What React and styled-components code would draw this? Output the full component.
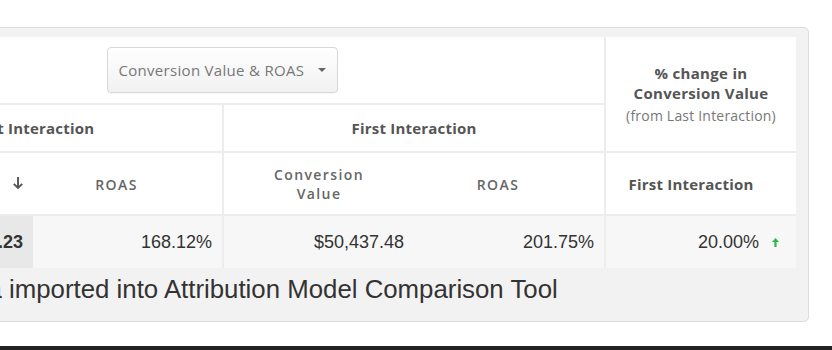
import React from 'react';
import styled, { createGlobalStyle } from 'styled-components';

const GlobalStyle = createGlobalStyle`
  body {
    margin: 0;
    background: #fff;
    font-family: 'Open Sans', 'Liberation Sans', sans-serif;
  }
`;

const Page = styled.div`
  width: 832px;
  height: 350px;
  overflow: hidden;
  display: flex;
  flex-direction: column;
  background: #fff;
`;

// the screenshot is scrolled sideways, so the panel starts off to the left
const Panel = styled.div`
  box-sizing: border-box;
  flex: none;
  width: 985px;
  height: 295px;
  margin: 27px 0 0 -176px;
  padding: 9px 12px 0;
  background: #f2f2f2;
  border: 1px solid #dcdcdc;
  border-radius: 5px;
`;

const Table = styled.table`
  width: 959px;
  table-layout: fixed;
  border-collapse: collapse;
  background: #fff;
`;

const Row = styled.tr`
  height: ${(p) => p.h}px;
  background: ${(p) => p.bg || '#fff'};
`;

const HeadCell = styled.th`
  padding: 0 ${(p) => p.pr || 6}px 0 ${(p) => p.pl || 6}px;
  text-align: center;
  vertical-align: middle;
  color: #555;
  font-size: 15px;
  font-weight: 700;
  letter-spacing: 0.2px;
  border-top: 2px solid #ededed;
  border-left: ${(p) => (p.divider ? '2px solid #ededed' : 'none')};
  white-space: ${(p) => (p.wrap ? 'normal' : 'nowrap')};
`;

const SmallHead = styled.span`
  display: inline-block;
  font-size: 14px;
  font-weight: 600;
  letter-spacing: 1.4px;
  line-height: 19px;
  color: #666;
`;

const ChangeHead = styled.div`
  font-size: 15px;
  line-height: 20px;
  color: #555;
  font-weight: 700;
  letter-spacing: 0.3px;
`;

const ChangeSub = styled.div`
  margin-top: 3px;
  font-size: 14px;
  line-height: 20px;
  color: #777;
  font-weight: 400;
  letter-spacing: 0.2px;
`;

const DataCell = styled.td`
  padding: 0 10px;
  text-align: right;
  vertical-align: middle;
  font-family: 'Liberation Sans', Arial, sans-serif;
  font-size: 18px;
  color: #333;
  font-weight: ${(p) => (p.strong ? 700 : 400)};
  background: ${(p) => (p.sorted ? '#e8e8e8' : 'transparent')};
  border-top: 2px solid #ededed;
  border-left: ${(p) => (p.divider ? '2px solid #ededed' : 'none')};
`;

const Dropdown = styled.button`
  display: inline-flex;
  align-items: center;
  gap: 14px;
  box-sizing: border-box;
  width: 231px;
  height: 46px;
  margin-left: 3px;
  padding: 0 10px 0 11px;
  border: 1px solid #d8d8d8;
  border-radius: 4px;
  background: linear-gradient(#ffffff, #f1f1f1);
  box-shadow: 0 1px 1px rgba(0, 0, 0, 0.04);
  font-family: 'Open Sans', 'Liberation Sans', sans-serif;
  font-size: 15px;
  letter-spacing: 0.3px;
  white-space: nowrap;
  color: #777;
`;

const Caret = styled.span`
  flex: none;
  width: 0;
  height: 0;
  border-left: 4px solid transparent;
  border-right: 4px solid transparent;
  border-top: 4px solid #666;
`;

const ArrowBox = styled.span`
  display: inline-flex;
  align-items: center;
  justify-content: flex-end;
  width: 100%;
  padding-right: 3px;
  box-sizing: border-box;
`;

const Change = styled.span`
  display: inline-flex;
  align-items: center;
  gap: 13px;
  padding-right: 7px;
`;

const Caption = styled.div`
  margin-top: 6px;
  margin-left: -23px;
  font-family: 'Liberation Sans', Arial, sans-serif;
  font-size: 25.8px;
  line-height: 30px;
  color: #333;
  white-space: nowrap;
`;

const Spacer = styled.div`
  flex: 1;
`;

const DarkBar = styled.div`
  height: 4px;
  background: #222;
`;

const SortDown = () => (
  <svg width="12" height="14" viewBox="0 0 12 14">
    <path d="M6 1v11M1.8 7.8L6 12l4.2-4.2" stroke="#555" strokeWidth="1.9" fill="none" />
  </svg>
);

const UpArrow = () => (
  <svg width="7" height="9" viewBox="0 0 7 9">
    <path d="M3.5 0L7 4H4.6v5H2.4V4H0z" fill="#2db84a" />
  </svg>
);

const App = () => (
  <Page>
    <GlobalStyle />
    <Panel>
      <Table>
        <colgroup>
          <col style={{ width: 196 }} />
          <col style={{ width: 190 }} />
          <col style={{ width: 191 }} />
          <col style={{ width: 191 }} />
          <col style={{ width: 191 }} />
        </colgroup>
        <tbody>
          <Row h={67}>
            <HeadCell colSpan={4} style={{ borderTop: 'none' }}>
              <Dropdown>
                Conversion Value &amp; ROAS
                <Caret />
              </Dropdown>
            </HeadCell>
            <HeadCell rowSpan={2} divider wrap style={{ borderTop: 'none' }}>
              <ChangeHead>% change in</ChangeHead>
              <ChangeHead>Conversion Value</ChangeHead>
              <ChangeSub>(from Last Interaction)</ChangeSub>
            </HeadCell>
          </Row>
          <Row h={48}>
            <HeadCell colSpan={2} pl={13}>Last Interaction</HeadCell>
            <HeadCell colSpan={2} divider>First Interaction</HeadCell>
          </Row>
          <Row h={63}>
            <HeadCell>
              <ArrowBox>
                <SortDown />
              </ArrowBox>
            </HeadCell>
            <HeadCell pr={28}>
              <SmallHead>ROAS</SmallHead>
            </HeadCell>
            <HeadCell divider wrap>
              <SmallHead>
                Conversion
                <br />
                Value
              </SmallHead>
            </HeadCell>
            <HeadCell pr={28}>
              <SmallHead>ROAS</SmallHead>
            </HeadCell>
            <HeadCell divider pr={26}>First Interaction</HeadCell>
          </Row>
          <Row h={53} bg="#f7f7f7">
            <DataCell strong sorted>$42,031.23</DataCell>
            <DataCell>168.12%</DataCell>
            <DataCell divider>$50,437.48</DataCell>
            <DataCell>201.75%</DataCell>
            <DataCell divider>
              <Change>
                20.00%
                <UpArrow />
              </Change>
            </DataCell>
          </Row>
        </tbody>
      </Table>
      <Caption>Conversion data imported into Attribution Model Comparison Tool</Caption>
    </Panel>
    <Spacer />
    <DarkBar />
  </Page>
);

export default App;
